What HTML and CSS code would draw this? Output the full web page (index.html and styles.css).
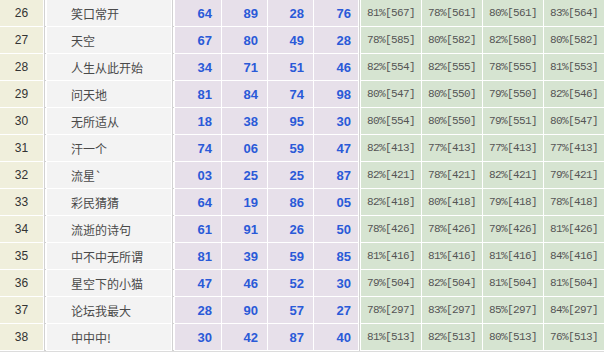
FILE: index.html
```html
<!DOCTYPE html>
<html lang="zh">
<head>
<meta charset="utf-8">
<link rel="stylesheet" href="styles.css">
</head>
<body>
<div class="board">
  <div class="row"><div class="no">26</div><div class="sep"></div><div class="name">笑口常开</div><div class="sep"></div><div class="n">64</div><div class="n">89</div><div class="n">28</div><div class="n last">76</div><div class="sep"></div><div class="p">81%[567]</div><div class="p">78%[561]</div><div class="p">80%[561]</div><div class="p">83%[564]</div></div>
  <div class="row"><div class="no">27</div><div class="sep"></div><div class="name">天空</div><div class="sep"></div><div class="n">67</div><div class="n">80</div><div class="n">49</div><div class="n last">28</div><div class="sep"></div><div class="p">78%[585]</div><div class="p">80%[582]</div><div class="p">82%[580]</div><div class="p">80%[582]</div></div>
  <div class="row"><div class="no">28</div><div class="sep"></div><div class="name">人生从此开始</div><div class="sep"></div><div class="n">34</div><div class="n">71</div><div class="n">51</div><div class="n last">46</div><div class="sep"></div><div class="p">82%[554]</div><div class="p">82%[555]</div><div class="p">78%[555]</div><div class="p">81%[553]</div></div>
  <div class="row"><div class="no">29</div><div class="sep"></div><div class="name">问天地</div><div class="sep"></div><div class="n">81</div><div class="n">84</div><div class="n">74</div><div class="n last">98</div><div class="sep"></div><div class="p">80%[547]</div><div class="p">80%[550]</div><div class="p">79%[550]</div><div class="p">82%[546]</div></div>
  <div class="row"><div class="no">30</div><div class="sep"></div><div class="name">无所适从</div><div class="sep"></div><div class="n">18</div><div class="n">38</div><div class="n">95</div><div class="n last">30</div><div class="sep"></div><div class="p">80%[554]</div><div class="p">80%[550]</div><div class="p">79%[551]</div><div class="p">80%[547]</div></div>
  <div class="row"><div class="no">31</div><div class="sep"></div><div class="name">汗一个</div><div class="sep"></div><div class="n">74</div><div class="n">06</div><div class="n">59</div><div class="n last">47</div><div class="sep"></div><div class="p">82%[413]</div><div class="p">77%[413]</div><div class="p">77%[413]</div><div class="p">77%[413]</div></div>
  <div class="row"><div class="no">32</div><div class="sep"></div><div class="name">流星`</div><div class="sep"></div><div class="n">03</div><div class="n">25</div><div class="n">25</div><div class="n last">87</div><div class="sep"></div><div class="p">82%[421]</div><div class="p">78%[421]</div><div class="p">82%[421]</div><div class="p">79%[421]</div></div>
  <div class="row"><div class="no">33</div><div class="sep"></div><div class="name">彩民猜猜</div><div class="sep"></div><div class="n">64</div><div class="n">19</div><div class="n">86</div><div class="n last">05</div><div class="sep"></div><div class="p">82%[418]</div><div class="p">80%[418]</div><div class="p">79%[418]</div><div class="p">78%[418]</div></div>
  <div class="row"><div class="no">34</div><div class="sep"></div><div class="name">流逝的诗句</div><div class="sep"></div><div class="n">61</div><div class="n">91</div><div class="n">26</div><div class="n last">50</div><div class="sep"></div><div class="p">78%[426]</div><div class="p">78%[426]</div><div class="p">79%[426]</div><div class="p">81%[426]</div></div>
  <div class="row"><div class="no">35</div><div class="sep"></div><div class="name">中不中无所谓</div><div class="sep"></div><div class="n">81</div><div class="n">39</div><div class="n">59</div><div class="n last">85</div><div class="sep"></div><div class="p">81%[416]</div><div class="p">81%[416]</div><div class="p">81%[416]</div><div class="p">84%[416]</div></div>
  <div class="row"><div class="no">36</div><div class="sep"></div><div class="name">星空下的小猫</div><div class="sep"></div><div class="n">47</div><div class="n">46</div><div class="n">52</div><div class="n last">30</div><div class="sep"></div><div class="p">79%[504]</div><div class="p">82%[504]</div><div class="p">81%[504]</div><div class="p">81%[504]</div></div>
  <div class="row"><div class="no">37</div><div class="sep"></div><div class="name">论坛我最大</div><div class="sep"></div><div class="n">28</div><div class="n">90</div><div class="n">57</div><div class="n last">27</div><div class="sep"></div><div class="p">78%[297]</div><div class="p">83%[297]</div><div class="p">85%[297]</div><div class="p">84%[297]</div></div>
  <div class="row"><div class="no">38</div><div class="sep"></div><div class="name">中中中!</div><div class="sep"></div><div class="n">30</div><div class="n">42</div><div class="n">87</div><div class="n last">40</div><div class="sep"></div><div class="p">81%[513]</div><div class="p">82%[513]</div><div class="p">80%[513]</div><div class="p">76%[513]</div></div>
</div>
</body>
</html>
```
FILE: styles.css
```css
html, body {
  margin: 0;
  padding: 0;
  background: #fff;
}
.board {
  width: 604px;
  display: flex;
  flex-direction: column;
  gap: 1px;
  padding-bottom: 1px;
  border-bottom: 1px solid #dcdcdc;
  background: #fff;
}
.row {
  display: grid;
  grid-template-columns: 43px 2px 124px 2px 46px 45px 45px 44px 1px 60px 60px 60px 60px;
  column-gap: 1px;
  height: 26px;
}
.row > div {
  display: flex;
  align-items: center;
  height: 26px;
}
.sep {
  background: linear-gradient(to right, #d2d2d2 0 1px, #fff 1px);
  box-shadow: 0 1px 0 #d2d2d2;
}
.row > .sep:nth-child(9) {
  background: #d2d2d2;
}
.no {
  background: #f0efdc;
  justify-content: center;
  font: 12px "Liberation Sans", Arial, sans-serif;
  color: #333;
}
.name {
  background: #f3f3f3;
  padding-left: 24px;
  font: 12px "Noto Sans CJK SC", "Liberation Sans", sans-serif;
  color: #4a4a4a;
}
.n {
  background: #e7e0ea;
  justify-content: flex-end;
  padding-right: 9px;
  font: bold 13px "Liberation Sans", Arial, sans-serif;
  color: #2a5ad8;
}
.n.last {
  padding-right: 7px;
}
.p {
  background: #d6e4d1;
  justify-content: center;
  font: 11px "Liberation Mono", "Courier New", monospace;
  letter-spacing: -0.6px;
  color: #555;
}
```
